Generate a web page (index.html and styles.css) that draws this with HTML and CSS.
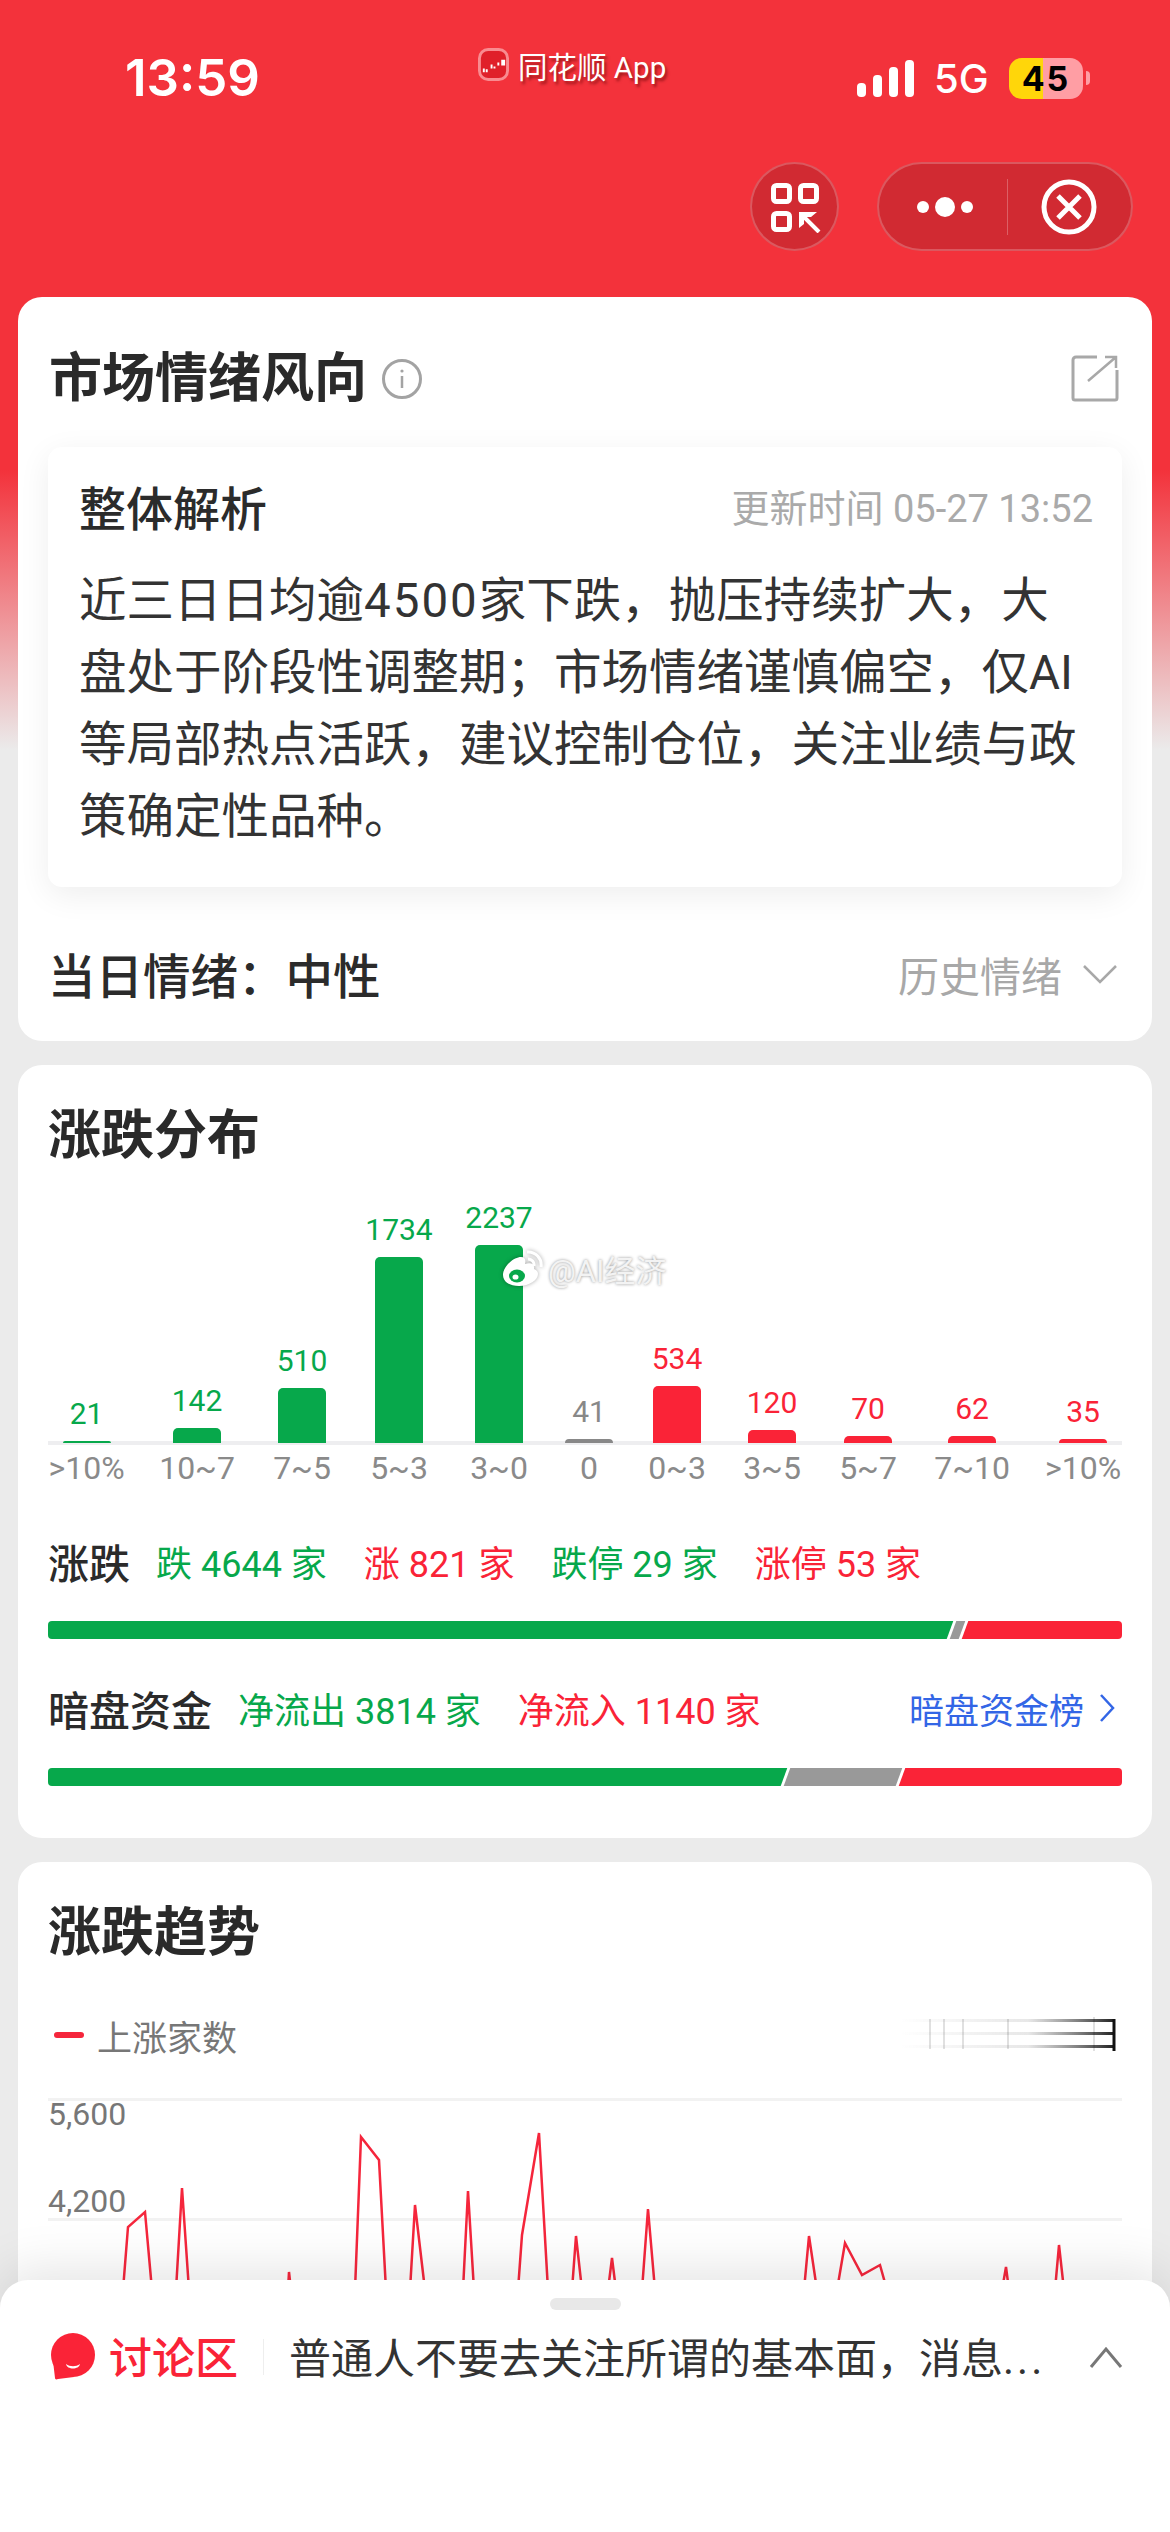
FILE: index.html
```html
<!DOCTYPE html>
<html lang="zh-CN">
<head>
  <title>市场情绪风向</title>
  <meta charset="utf-8">
  <meta name="viewport" content="width=device-width, initial-scale=1">
  <link rel="stylesheet" href="styles.css">
</head>
<body>

<div class="top">
  <div class="status">
    <div class="time">13:59</div>
    <div class="app-tag">
      <svg class="app-icon" viewBox="0 0 32 34">
        <rect x="1.5" y="1.5" width="29" height="31" rx="9" fill="#e0202a" stroke="#f98b90" stroke-width="3"/>
        <path d="M6 25v-4M9 25v-3M14 21v-4M17 21v-2M21 18v-3M25 18v-6M27 18v-6" stroke="#fff" stroke-width="2" fill="none"/>
      </svg>
      <span>同花顺 App</span>
    </div>
    <div class="status-right">
      <div class="signal"><i class="s1"></i><i class="s2"></i><i class="s3"></i><i class="s4"></i></div>
      <div class="net">5G</div>
      <div class="battery"><span>45</span></div>
      <div class="nub"></div>
    </div>
  </div>
  <div class="nav">
    <div class="round-btn">
      <svg width="52" height="52" viewBox="0 0 52 52" fill="none" stroke="#fff" stroke-width="5">
        <rect x="4.5" y="4.5" width="16" height="16" rx="3"/>
        <rect x="31.5" y="4.5" width="16" height="16" rx="3"/>
        <rect x="4.5" y="32.5" width="16" height="16" rx="3"/>
        <path d="M34 35L50 51" stroke-width="4"/>
        <path d="M30 31H48L42 36H35V43L30 47Z" stroke="none" fill="#fff"/>
      </svg>
    </div>
    <div class="pill">
      <div class="pill-part dots"><i class="dot"></i><i class="dot big"></i><i class="dot"></i></div>
      <div class="pill-line"></div>
      <div class="pill-part">
        <svg width="56" height="56" viewBox="0 0 56 56" fill="none" stroke="#fff">
          <circle cx="28" cy="28" r="25" stroke-width="5"/>
          <path d="M17 17L39 39M39 17L17 39" stroke-width="5"/>
        </svg>
      </div>
    </div>
  </div>
</div>

<div class="card card-mood">
  <div class="card-head">
    <div class="card-title">市场情绪风向</div>
    <svg class="info" width="42" height="42" viewBox="0 0 42 42" fill="none" stroke="#a3a3a3">
      <circle cx="21" cy="21" r="18.5" stroke-width="3"/>
      <path d="M21 18v12" stroke-width="2.5"/>
      <circle cx="21" cy="13" r="1.6" fill="#a3a3a3" stroke="none"/>
    </svg>
    <svg class="share" width="48" height="48" viewBox="0 0 48 48" fill="none" stroke="#a8a8a8" stroke-width="3">
      <path d="M26 3H5a3 3 0 0 0-3 3v38a2 2 0 0 0 2 2h40a2 2 0 0 0 2-2V16"/>
      <path d="M17 27L45 3M34 3h11v11" stroke-width="2.5"/>
    </svg>
  </div>
  <div class="brief">
    <div class="brief-head">
      <div class="brief-title">整体解析</div>
      <div class="brief-time">更新时间 05-27 13:52</div>
    </div>
    <p class="brief-text">近三日日均逾<span class="num">4500</span>家下跌，抛压持续扩大，大<br>盘处于阶段性调整期；市场情绪谨慎偏空，仅AI<br>等局部热点活跃，建议控制仓位，关注业绩与政<br>策确定性品种。</p>
  </div>
  <div class="mood-row">
    <div class="mood-now">当日情绪：中性</div>
    <div class="mood-history">历史情绪
      <svg width="34" height="20" viewBox="0 0 34 20" fill="none" stroke="#a8a8a8" stroke-width="2.5"><path d="M1 2L17 18L33 2"/></svg>
    </div>
  </div>
</div>

<div class="card card-dist">
  <div class="card-title">涨跌分布</div>
  <div class="dist">
    <div class="col down"><div class="val">21</div><div class="bar" style="height:2px"></div><div class="lab">&gt;10%</div></div>
    <div class="col down"><div class="val">142</div><div class="bar" style="height:15px"></div><div class="lab">10~7</div></div>
    <div class="col down"><div class="val">510</div><div class="bar" style="height:55px"></div><div class="lab">7~5</div></div>
    <div class="col down"><div class="val">1734</div><div class="bar" style="height:186px"></div><div class="lab">5~3</div></div>
    <div class="col down"><div class="val">2237</div><div class="bar" style="height:198px"></div><div class="lab">3~0</div></div>
    <div class="col flat"><div class="val">41</div><div class="bar" style="height:4px"></div><div class="lab">0</div></div>
    <div class="col up"><div class="val">534</div><div class="bar" style="height:57px"></div><div class="lab">0~3</div></div>
    <div class="col up"><div class="val">120</div><div class="bar" style="height:13px"></div><div class="lab">3~5</div></div>
    <div class="col up"><div class="val">70</div><div class="bar" style="height:7px"></div><div class="lab">5~7</div></div>
    <div class="col up"><div class="val">62</div><div class="bar" style="height:7px"></div><div class="lab">7~10</div></div>
    <div class="col up"><div class="val">35</div><div class="bar" style="height:4px"></div><div class="lab">&gt;10%</div></div>
    <div class="mark">
      <svg class="mark-logo" width="44" height="38" viewBox="0 0 44 38" fill="none">
        <path d="M3 25C3 16 14 7 21 7c4 0 5 3 4 7 6-2 10 0 9 5 3 1 4 3 4 5 0 6-9 12-19 12C10 36 3 32 3 25z" fill="#fff"/>
        <ellipse cx="17" cy="26" rx="8" ry="6.5" fill="#07a84b"/>
        <ellipse cx="15.5" cy="27" rx="3" ry="2.6" fill="#fff"/>
        <path d="M27 2a13 13 0 0 1 14 15M28 9a6 6 0 0 1 6 7" stroke="#fff" stroke-width="3"/>
      </svg>
      <span>@AI经济</span>
    </div>
  </div>

  <div class="stat-row">
    <div class="stat-name">涨跌</div>
    <div class="stat-items">
      <span class="green">跌 <b>4644</b> 家</span>
      <span class="red">涨 <b>821</b> 家</span>
      <span class="green">跌停 <b>29</b> 家</span>
      <span class="red">涨停 <b>53</b> 家</span>
    </div>
  </div>
  <div class="ratio">
    <div class="seg seg-g" style="width:912px"></div>
    <div class="seg seg-n" style="width:9px"></div>
    <div class="seg seg-r" style="width:175px"></div>
  </div>

  <div class="stat-row stat-row2">
    <div class="stat-name">暗盘资金</div>
    <div class="stat-items tight">
      <span class="green">净流出 <b>3814</b> 家</span>
      <span class="red">净流入 <b>1140</b> 家</span>
    </div>
    <div class="stat-link">暗盘资金榜
      <svg width="16" height="28" viewBox="0 0 16 28" fill="none" stroke="#3366e6" stroke-width="2.5"><path d="M2 1L14 14L2 27"/></svg>
    </div>
  </div>
  <div class="ratio">
    <div class="seg seg-g" style="width:746px"></div>
    <div class="seg seg-n" style="width:112px"></div>
    <div class="seg seg-r" style="width:240px"></div>
  </div>
</div>

<div class="card card-trend">
  <div class="card-title">涨跌趋势</div>
  <div class="legend">
    <i class="legend-dash"></i>
    <span class="legend-text">上涨家数</span>
    <svg class="legend-fade" width="216" height="36" viewBox="0 0 216 36">
      <defs>
        <linearGradient id="fade" x1="0" x2="1" y1="0" y2="0">
          <stop offset="0" stop-color="#555" stop-opacity="0"/>
          <stop offset=".6" stop-color="#555" stop-opacity=".14"/>
          <stop offset="1" stop-color="#222"/>
        </linearGradient>
      </defs>
      <rect y="2" width="214" height="3" fill="url(#fade)"/>
      <rect y="15" width="214" height="3" fill="url(#fade)"/>
      <rect y="28" width="214" height="3" fill="url(#fade)"/>
      <path d="M30 2v30M44 2v30M63 2v30M108 2v30M194 0v34" stroke="#000" stroke-opacity=".12" stroke-width="2"/>
      <path d="M214 2v32" stroke="#111" stroke-width="3"/>
    </svg>
  </div>
  <div class="plot">
    <div class="grid-line"></div>
    <div class="tick">5,600</div>
    <div class="tick tick2">4,200</div>
    <div class="grid-line"></div>
    <svg class="line" width="1074" height="200" viewBox="48 2098 1074 200" fill="none" stroke="#f5263c" stroke-width="2.5">
      <polyline points="123,2290 128,2227 145,2212 152,2290"/>
      <polyline points="176,2290 182,2188 189,2290"/>
      <polyline points="288,2290 289,2272 291,2290"/>
      <polyline points="355,2290 361,2137 379,2160 386,2290"/>
      <polyline points="410,2290 415,2205 425,2290"/>
      <polyline points="463,2290 468,2191 474,2290"/>
      <polyline points="518,2290 522,2235 539,2133 548,2290"/>
      <polyline points="572,2290 576,2236 582,2290"/>
      <polyline points="608,2290 612,2258 616,2290"/>
      <polyline points="642,2290 648,2209 655,2290"/>
      <polyline points="804,2290 809,2236 817,2290"/>
      <polyline points="837,2290 845,2243 862,2275 880,2265 887,2290"/>
      <polyline points="1002,2290 1006,2267 1009,2290"/>
      <polyline points="1055,2290 1059,2245 1064,2290"/>
    </svg>
  </div>
</div>

<div class="sheet">
  <div class="handle"></div>
  <div class="sheet-row">
    <svg class="talk-icon" width="46" height="48" viewBox="0 0 46 48">
      <circle cx="23" cy="22" r="22" fill="#fa2337"/>
      <path d="M3 28L5 45C5 46 6 47 8 46L24 44Z" fill="#fa2337"/>
      <path d="M16 31c4 3 10 3 14 0c-1 6-13 6-14 0z" fill="#fff"/>
    </svg>
    <div class="talk-name">讨论区</div>
    <div class="talk-line"></div>
    <div class="talk-text">普通人不要去关注所谓的基本面，消息<span class="more">...</span></div>
    <svg class="talk-up" width="34" height="22" viewBox="0 0 34 22" fill="none" stroke="#777" stroke-width="3"><path d="M2 21L17 3L32 21"/></svg>
  </div>
</div>

</body>
</html>
```

FILE: styles.css
```css
* {
  box-sizing: border-box;
}
html, body {
  margin: 0;
  padding: 0;
}
body {
  position: relative;
  width: 1170px;
  height: 2532px;
  overflow: hidden;
  font-family: Roboto, "Noto Sans CJK SC", sans-serif;
  color: #2b2b2b;
  background: linear-gradient(#f3323b 0, #f3323b 470px, #ebebeb 750px);
}

/* top red area */
.top {
  height: 297px;
}
.status {
  height: 162px;
  padding: 48px 0 0 125px;
  display: flex;
  align-items: flex-start;
  color: #fff;
}
.time {
  width: 353px;
  font-family: Inter, sans-serif;
  font-size: 51px;
  line-height: 60px;
  font-weight: 600;
}
.app-tag {
  display: flex;
  align-items: center;
  gap: 9px;
  width: 379px;
  height: 33px;
  font-size: 29.5px;
  text-shadow: 2px 3px 3px rgba(90, 0, 0, .55);
}
.app-icon {
  width: 31px;
  height: 33px;
}
.status-right {
  display: flex;
  align-items: center;
  height: 60px;
}
.signal {
  display: flex;
  align-items: flex-end;
  gap: 7px;
  width: 57px;
  height: 37px;
}
.signal i {
  width: 9px;
  background: #fff;
  border-radius: 4px;
}
.s1 { height: 14px; }
.s2 { height: 22px; }
.s3 { height: 30px; }
.s4 { height: 37px; }
.net {
  margin-left: 20px;
  width: 55px;
  font-family: Inter, sans-serif;
  font-size: 40px;
  font-weight: 500;
}
.battery {
  margin-left: 20px;
  width: 74px;
  height: 41px;
  border-radius: 13px;
  background: linear-gradient(90deg, #ffd60a 0, #ffd60a 46%, #ff9ea4 46%);
  color: #000;
  font-family: Inter, sans-serif;
  font-size: 34px;
  font-weight: 700;
  letter-spacing: 2px;
  line-height: 41px;
  text-align: center;
}
.nub {
  width: 4px;
  height: 14px;
  margin-left: 3px;
  border-radius: 0 4px 4px 0;
  background: #ff9ea4;
}
.nav {
  display: flex;
  justify-content: flex-end;
  gap: 38px;
  padding-right: 37px;
}
.round-btn, .pill {
  height: 89px;
  background: #d12a32;
  border: 2px solid rgba(255, 255, 255, .22);
  border-radius: 45px;
  display: flex;
  align-items: center;
  justify-content: center;
}
.round-btn {
  width: 89px;
}
.pill {
  width: 256px;
}
.pill-part {
  flex: 1;
  display: flex;
  align-items: center;
  justify-content: center;
}
.pill-line {
  width: 1px;
  height: 56px;
  background: rgba(255, 255, 255, .25);
}
.dots {
  gap: 6px;
  padding-left: 4px;
}
.dot {
  width: 12px;
  height: 12px;
  border-radius: 50%;
  background: #fff;
}
.dot.big {
  width: 20px;
  height: 20px;
}

/* cards */
.card {
  margin: 0 18px 24px;
  padding: 41px 30px 52px;
  background: #fff;
  border-radius: 24px;
}
.card-title {
  font-size: 53px;
  line-height: 60px;
  font-weight: 700;
  color: #2a2a2a;
}
.card-head {
  display: flex;
  align-items: center;
  padding: 0 3px 0 1px;
}
.info {
  margin-left: 14px;
}
.share {
  margin-left: auto;
  margin-top: -2px;
}
.card-mood {
  padding: 52px 30px 35px;
}
.brief {
  margin-top: 38px;
  padding: 33px 29px 34px 31px;
  border-radius: 14px;
  background: #fff;
  box-shadow: 0 8px 32px rgba(0, 0, 0, .07);
}
.brief-head {
  display: flex;
  align-items: center;
  justify-content: space-between;
  height: 50px;
}
.brief-title {
  font-size: 47px;
  font-weight: 500;
}
.brief-time {
  font-size: 38px;
  color: #aaa;
}
.brief-text {
  margin: 35px 0 0;
  font-size: 47.5px;
  line-height: 72px;
  white-space: nowrap;
  color: #333;
}
.num {
  letter-spacing: 2px;
}
.mood-row {
  display: flex;
  align-items: center;
  justify-content: space-between;
  height: 60px;
  margin-top: 59px;
  padding: 0 5px 5px 0;
}
.mood-now {
  font-size: 47.5px;
  font-weight: 500;
}
.mood-history {
  display: flex;
  align-items: center;
  gap: 21px;
  font-size: 41px;
  color: #a8a8a8;
}

/* distribution */
.dist {
  position: relative;
  display: grid;
  grid-template-columns: 77px 144px 66px 128px 72px 108px 68px 122px 70px 138px 84px;
  justify-content: start;
  align-items: end;
  height: 320px;
}
.dist::after {
  content: "";
  position: absolute;
  left: 0;
  right: 0;
  bottom: 41px;
  height: 4px;
  background: #eeeef0;
  z-index: 0;
}
.col {
  position: relative;
  z-index: 1;
  display: flex;
  flex-direction: column;
  align-items: center;
}
.val {
  margin-bottom: 12px;
  font-size: 30px;
  line-height: 30px;
}
.bar {
  width: 48px;
  border-radius: 5px 5px 0 0;
}
.lab {
  margin-top: 8px;
  font-size: 32px;
  line-height: 35px;
  color: #8a8a8a;
  white-space: nowrap;
}
.down .val { color: #07a84b; }
.down .bar { background: #07a84b; }
.up .val { color: #fa2337; }
.up .bar { background: #fa2337; }
.flat .val { color: #888; }
.flat .bar { background: #888; }
.mark {
  position: absolute;
  left: 452px;
  top: 80px;
  z-index: 2;
  display: flex;
  align-items: center;
  gap: 4px;
  font-size: 31px;
  color: #f3f3f3;
  text-shadow: 0 0 3px rgba(0, 0, 0, .45);
}
.mark-logo {
  filter: drop-shadow(0 0 2px rgba(0, 0, 0, .35));
}

.stat-row {
  display: flex;
  align-items: center;
  height: 50px;
  margin-top: 52px;
  padding-bottom: 4px;
}
.stat-row2 {
  margin-top: 46px;
}
.stat-name {
  font-size: 41px;
  font-weight: 500;
}
.stat-items {
  display: flex;
  gap: 37px;
  margin-left: 26px;
  font-size: 36px;
  white-space: nowrap;
}
.stat-items b {
  font-weight: 450;
}
.green { color: #07a84b; }
.red { color: #fa2337; }
.stat-link {
  display: flex;
  align-items: center;
  gap: 15px;
  margin-left: auto;
  padding-right: 7px;
  font-size: 35px;
  color: #3366e6;
}
.ratio {
  display: flex;
  gap: 3px;
  height: 18px;
  margin-top: 33px;
  border-radius: 4px;
  overflow: hidden;
}
.seg {
  flex: none;
  transform: skewX(-20deg);
}
.seg-g {
  background: #07a84b;
  margin-left: -10px;
}
.seg-n {
  background: #999;
}
.seg-r {
  background: #fa2337;
  margin-right: -10px;
}

/* trend */
.legend {
  display: flex;
  align-items: center;
  height: 50px;
  margin-top: 47px;
}
.legend-dash {
  width: 30px;
  height: 6px;
  margin-left: 6px;
  border-radius: 3px;
  background: #f5263c;
}
.legend-text {
  margin-left: 13px;
  font-size: 35px;
  color: #777;
}
.legend-fade {
  margin-left: auto;
  margin-right: 6px;
  filter: blur(.7px);
}
.plot {
  position: relative;
  height: 320px;
  margin-top: 38px;
}
.grid-line {
  height: 3px;
  background: #f2f2f2;
}
.tick {
  margin-top: -2px;
  font-size: 32px;
  line-height: 30px;
  color: #777;
}
.tick2 {
  margin-top: 57px;
  margin-bottom: 2px;
}
.line {
  position: absolute;
  left: 0;
  top: 0;
}

/* bottom sheet */
.sheet {
  position: absolute;
  left: 0;
  right: 0;
  top: 2280px;
  bottom: 0;
  background: #fff;
  border-radius: 28px 28px 0 0;
  box-shadow: 0 -12px 50px rgba(0, 0, 0, .1);
}
.handle {
  width: 71px;
  height: 12px;
  margin: 18px auto 0;
  border-radius: 6px;
  background: #e8e8e8;
}
.sheet-row {
  display: flex;
  align-items: center;
  height: 60px;
  margin-top: 17px;
  padding: 0 47px 0 50px;
}
.talk-name {
  margin-left: 13px;
  padding-bottom: 4px;
  font-size: 43px;
  font-weight: 500;
  color: #fa2337;
}
.talk-line {
  width: 1px;
  height: 36px;
  margin: 0 25px;
  background: #eee;
}
.talk-text {
  flex: 1;
  padding-bottom: 4px;
  font-size: 42px;
  color: #333;
  white-space: nowrap;
}
.more {
  letter-spacing: 3px;
}
```
